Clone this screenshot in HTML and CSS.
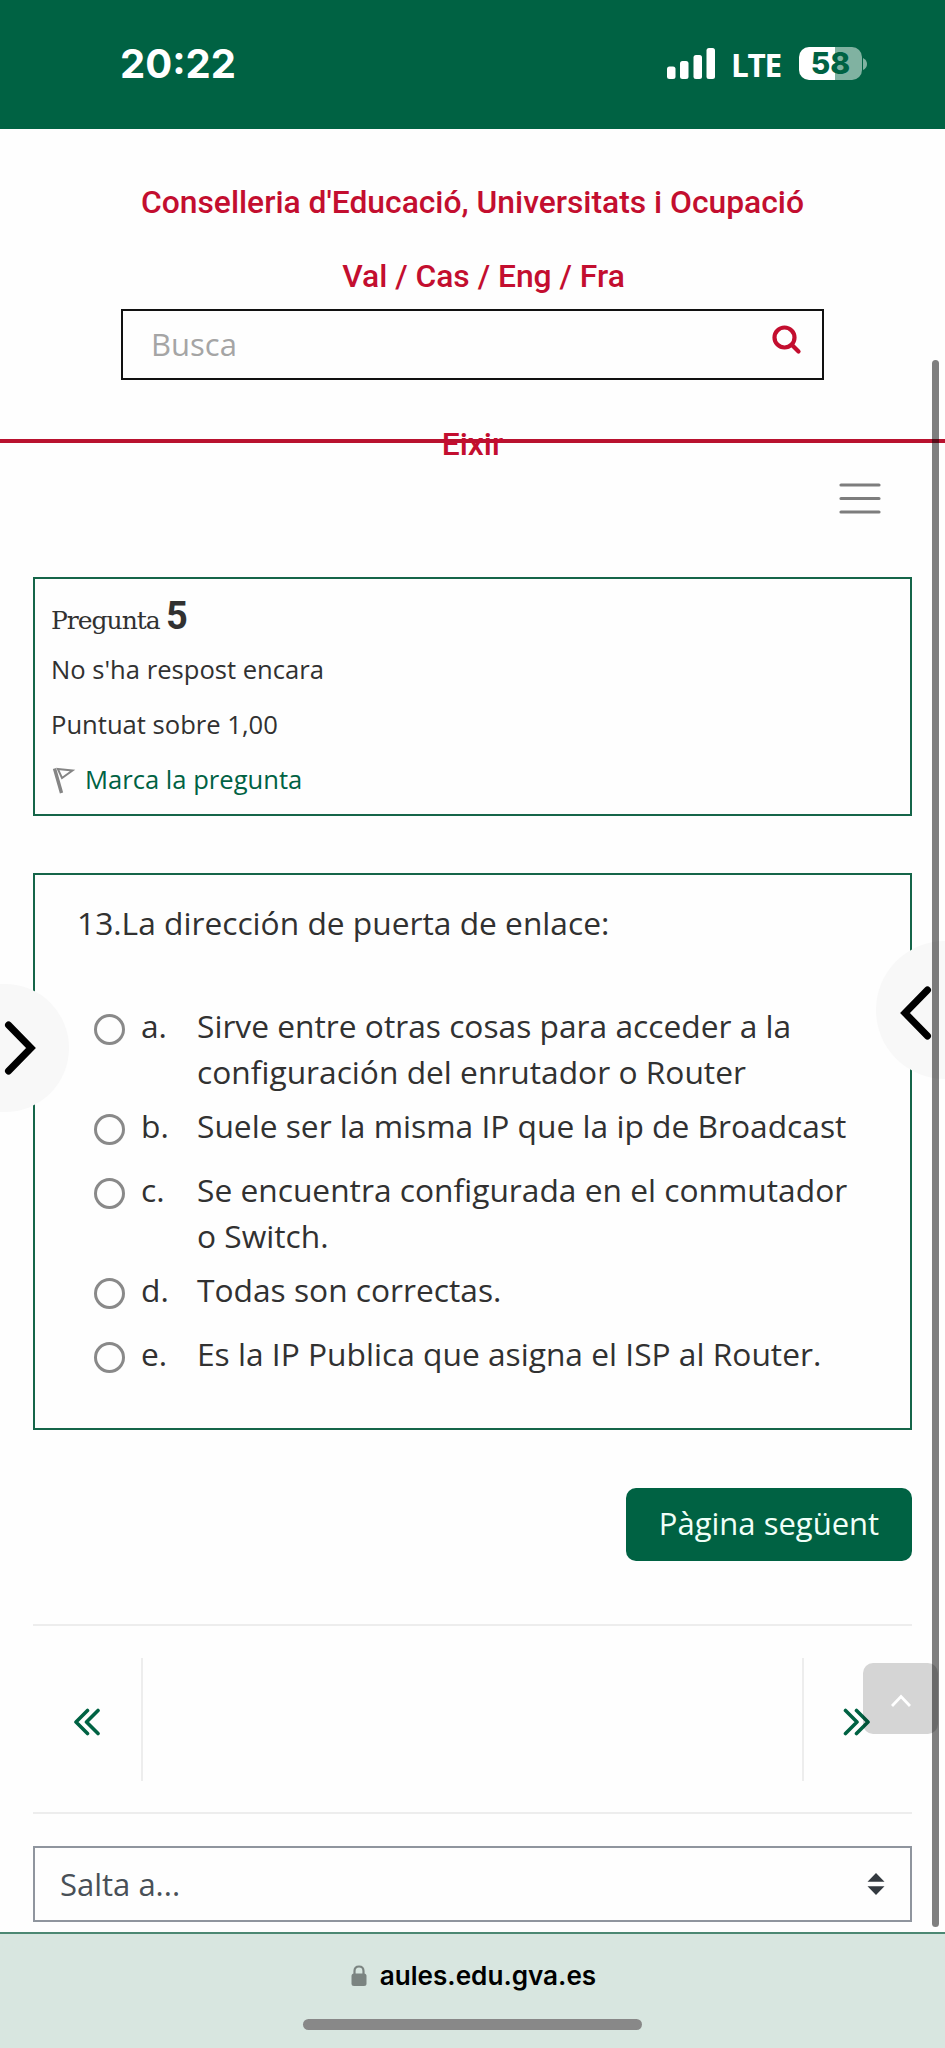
FILE: index.html
```html
<!DOCTYPE html>
<html lang="ca">
<head>
<meta charset="utf-8">
<title>Aules</title>
<link rel="stylesheet" href="styles.css">
</head>
<body>
<div class="status">
  <span class="time">20:22</span>
  <div class="status-right">
    <svg class="signal" width="48" height="32" viewBox="0 0 48 32" fill="#fff"><rect x="0" y="18.500" width="8.500" height="12.500" rx="2.500"/><rect x="13" y="13" width="8.500" height="18" rx="2.500"/><rect x="26.500" y="7" width="8.500" height="24" rx="2.500"/><rect x="39.500" y="0" width="8.500" height="31" rx="2.500"/></svg>
    <span class="lte">LTE</span>
    <div class="battery">58</div>
    <svg class="battery-tip" width="4" height="12" viewBox="0 0 4 12"><path d="M0 0Q4 2 4 6T0 12Z" fill="#80b2a1"/></svg>
  </div>
</div>
<header class="header">
  <a class="org"><span>Conselleria d'Educació, Universitats i Ocupació</span></a>
  <div class="langs"><span>Val / Cas / Eng / Fra</span></div>
  <div class="search">
    <span>Busca</span>
    <svg width="30" height="30" viewBox="0 0 30 30" fill="none" stroke="#c30e2f" stroke-width="4.200" stroke-linecap="round"><circle cx="12.500" cy="12.500" r="10"/><path d="M20 20L26.500 26.500"/></svg>
  </div>
  <a class="exit"><span>Eixir</span></a>
</header>
<div class="menu">
  <svg width="42" height="32" viewBox="0 0 42 32" stroke="#7d7d7d" stroke-width="3.200" stroke-linecap="round"><path d="M2 2H40M2 15.500H40M2 29H40"/></svg>
</div>
<main class="main">
  <section class="info">
    <h3 class="info-title"><span class="word">Pregunta</span><span class="num">5</span></h3>
    <div class="info-row"><span class="state">No s'ha respost encara</span></div>
    <div class="info-row"><span class="grade">Puntuat sobre 1,00</span></div>
    <div class="info-row flag">
      <svg width="24" height="28" viewBox="0 0 24 28" fill="none" stroke="#858585"><path d="M2.500 1.500L9.500 26" stroke-width="3.400"/><path d="M5.800 2L20.500 3.500L10 11Z" stroke-width="2"/></svg>
      <a>Marca la pregunta</a>
    </div>
  </section>
  <section class="question">
    <p class="qtext"><span>13.La dirección de puerta de enlace:</span></p>
    <div class="answer"><i class="radio"></i><span class="letter">a.</span><span class="opt">Sirve entre otras cosas para acceder a la<br>configuración del enrutador o Router</span></div>
    <div class="answer"><i class="radio"></i><span class="letter">b.</span><span class="opt">Suele ser la misma IP que la ip de Broadcast</span></div>
    <div class="answer"><i class="radio"></i><span class="letter">c.</span><span class="opt">Se encuentra configurada en el conmutador<br>o Switch.</span></div>
    <div class="answer"><i class="radio"></i><span class="letter">d.</span><span class="opt">Todas son correctas.</span></div>
    <div class="answer"><i class="radio"></i><span class="letter">e.</span><span class="opt">Es la IP Publica que asigna el ISP al Router.</span></div>
  </section>
  <div class="actions"><a class="next">Pàgina següent</a></div>
  <nav class="pager">
    <a class="pager-side prev"><svg width="28" height="28" viewBox="0 0 28 28" fill="none" stroke="#006243" stroke-width="3.600" stroke-linecap="round" stroke-linejoin="round"><path d="M14.500 2.500L3 14L14.500 25.500M25 2.500L13.500 14L25 25.500"/></svg></a>
    <a class="pager-side after"><svg width="28" height="28" viewBox="0 0 28 28" fill="none" stroke="#006243" stroke-width="3.600" stroke-linecap="round" stroke-linejoin="round"><path d="M2.500 2.500L14 14L2.500 25.500M13.500 2.500L25 14L13.500 25.500"/></svg></a>
  </nav>
  <div class="jump">
    <span>Salta a...</span>
    <svg width="18" height="22" viewBox="0 0 18 22" fill="#343a40"><path d="M0.500 8.700L9 0L17.500 8.700ZM0.500 13.300L9 22L17.500 13.300Z"/></svg>
  </div>
</main>
<footer class="browser">
  <div class="address">
    <svg width="16" height="22" viewBox="0 0 16 22"><rect x="0.500" y="8.500" width="15" height="12.500" rx="2.500" fill="#7b8481"/><path d="M3.500 10V6Q3.500 1.500 8 1.500T12.500 6V10" fill="none" stroke="#7b8481" stroke-width="2.200"/></svg>
    <span>aules.edu.gva.es</span>
  </div>
  <div class="home"></div>
</footer>
<a class="drawer drawer-left"><svg width="36" height="56" viewBox="0 0 36 56" fill="none" stroke="#000" stroke-width="7" stroke-linecap="round" stroke-linejoin="miter"><path d="M8.500 5L31 28L8.500 51"/></svg></a>
<a class="drawer drawer-right"><svg width="36" height="56" viewBox="0 0 36 56" fill="none" stroke="#000" stroke-width="7" stroke-linecap="round" stroke-linejoin="miter"><path d="M27.500 5L5 28L27.500 51"/></svg></a>
<div class="scrollbar"></div>
<a class="totop"><svg width="20" height="13" viewBox="0 0 20 13" fill="none" stroke="#fff" stroke-width="2.800"><path d="M1 12L10 2.500L19 12"/></svg></a>
</body>
</html>
```
FILE: styles.css
```css
* { box-sizing: border-box; }
body {
  margin: 0;
  width: 945px;
  height: 2048px;
  position: relative;
  overflow: hidden;
  background: #fefefe;
  color: #313131;
  font-family: "Open Sans", "Noto Sans", sans-serif;
  white-space: nowrap;
}
svg { display: block; flex: none; }

.status {
  height: 129px;
  background: #006243;
  color: #fff;
  display: flex;
  justify-content: space-between;
  padding: 0 78px 0 120px;
  font-family: Inter, sans-serif;
}
.time { font-size: 40px; font-weight: 700; line-height: 50px; padding-top: 39px; }
.status-right { display: flex; padding-top: 47px; }
.signal { margin-top: 1px; }
.lte { font: 700 31.5px/50px "Open Sans", sans-serif; letter-spacing: -1.3px; margin: -7px 0 0 16px; width: 50px; }
.battery {
  width: 63px;
  height: 33px;
  margin-left: 18px;
  border-radius: 10px;
  background: linear-gradient(90deg, #fff 36px, #80b2a1 36px);
  color: #006243;
  font-size: 30px;
  font-weight: 800;
  line-height: 33px;
  text-align: center;
}
.battery-tip { margin: 11px 0 0 1px; }

.header {
  height: 314px;
  border-bottom: 4px solid #b9122f;
  padding-top: 50px;
  display: flex;
  flex-direction: column;
  align-items: center;
  color: #c30e2f;
  font: 500 31.8px/46px Roboto, sans-serif;
}
.org { height: 74px; flex: none; }
.langs { height: 56px; flex: none; padding-left: 22px; }
.search {
  width: 703px;
  height: 71px;
  flex: none;
  border: 2px solid #111;
  display: flex;
  justify-content: space-between;
  padding: 0 20px 0 28px;
  color: #a5a5a5;
  font: 400 31px/66px "Open Sans", sans-serif;
}
.search svg { margin-top: 14px; }
.exit { margin-top: 41px; flex: none; }

.menu { height: 134px; display: flex; justify-content: flex-end; padding: 40px 64px 0 0; }

.main { padding: 0 33px; }
.info {
  height: 239px;
  border: 2px solid #156549;
  padding: 10px 16px;
  font-size: 25.6px;
  line-height: 55px;
}
.info-title { margin: 0; height: 53px; font-weight: 400; display: flex; align-items: baseline; line-height: 53px; }
.word { font: 400 25px/53px "DejaVu Serif", serif; width: 115px; letter-spacing: -1px; }
.num { font: 700 38px/55px Roboto, sans-serif; }
.info-row { height: 55px; }
.flag { display: flex; color: #006243; }
.flag svg { margin: 15px 9px 0 1px; }

.question {
  height: 557px;
  margin-top: 57px;
  border: 2px solid #156549;
  padding: 25px 0 0 59px;
  font-size: 31.73px;
  line-height: 46px;
}
.qtext { margin: 0 0 57px -17px; }
.answer { display: flex; min-height: 56px; margin-bottom: 8px; }
.radio { width: 31px; height: 31px; flex: none; margin-top: 11px; border: 3px solid #898989; border-radius: 50%; }
.letter { width: 56px; margin-left: 16px; }

.actions { display: flex; justify-content: flex-end; padding-top: 58px; }
.next {
  width: 286px;
  height: 73px;
  border-radius: 10px;
  background: #006243;
  color: #f0fff8;
  text-align: center;
  font-size: 31px;
  line-height: 70px;
}
.pager {
  height: 190px;
  margin-top: 63px;
  border: solid #ededed;
  border-width: 2px 0;
  padding: 32px 0;
  display: flex;
  justify-content: space-between;
}
.pager-side { width: 110px; padding-top: 50px; height: 123px; }
.prev { border-right: 2px solid #ededed; padding-left: 40px; }
.after { border-left: 2px solid #ededed; padding-left: 39px; }
.jump {
  height: 76px;
  margin-top: 32px;
  border: 2px solid #8f959e;
  padding: 0 25px 0 25px;
  display: flex;
  justify-content: space-between;
  align-items: center;
  color: #495057;
  font-size: 31px;
}

.browser {
  height: 116px;
  margin-top: 10px;
  border-top: 2px solid #4c8873;
  background: #d8e6e0;
  display: flex;
  flex-direction: column;
  align-items: center;
}
.address { display: flex; gap: 13px; padding: 22px 0 0 2px; height: 85px; color: #000; font: 600 26.100px/40px Inter, sans-serif; }
.address svg { margin-top: 9px; }
.home { width: 339px; height: 11px; border-radius: 6px; background: #888; }

.drawer { position: absolute; background: #f8f8f8; overflow: hidden; }
.drawer-left { left: 0; top: 984px; width: 69px; height: 128px; border-radius: 0 64px 64px 0; padding-top: 36px; }
.drawer-right { right: 0; top: 941px; width: 69px; height: 138px; border-radius: 69px 0 0 69px; padding: 44px 0 0 24px; }
.scrollbar { position: absolute; left: 932px; top: 360px; width: 7px; height: 1567px; border-radius: 4px; background: rgba(0, 0, 0, .5); }
.totop {
  position: absolute;
  left: 863px;
  top: 1663px;
  width: 75px;
  height: 71px;
  border-radius: 10px;
  background: rgba(0, 0, 0, .16);
  display: flex;
  align-items: center;
  justify-content: center;
}
.totop svg { margin-top: 4px; }
```
